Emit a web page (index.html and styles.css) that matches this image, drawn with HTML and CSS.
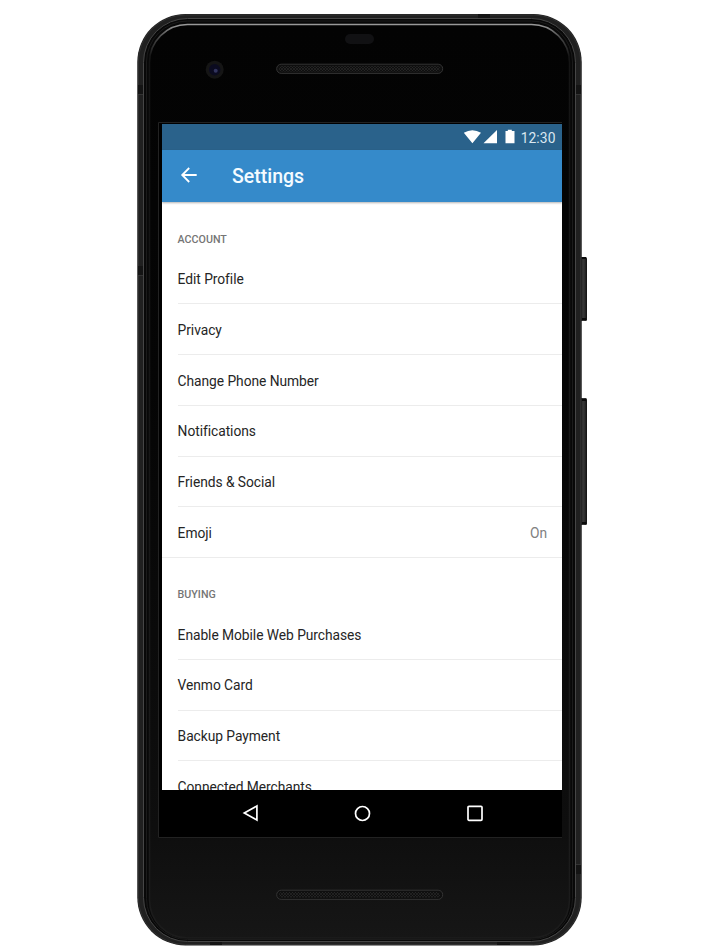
FILE: index.html
```html
<!DOCTYPE html>
<html lang="en">
<head>
<meta charset="utf-8">
<title>Settings</title>
<link rel="stylesheet" href="styles.css">
</head>
<body>
<main class="phone">
  <svg class="shell" width="452" height="936" viewBox="136 12 452 936" aria-hidden="true">
    <defs>
      <linearGradient id="face" x1="0" y1="0" x2="0" y2="1"><stop offset="0" stop-color="#030303"/><stop offset=".4" stop-color="#050505"/><stop offset=".88" stop-color="#0e0e0e"/><stop offset="1" stop-color="#161616"/></linearGradient>
      <linearGradient id="shine" x1="0" y1="0" x2="0" y2="1"><stop offset="0" stop-color="#999"/><stop offset=".014" stop-color="#484848"/><stop offset=".035" stop-color="#141414"/><stop offset="1" stop-color="#1c1c1c"/></linearGradient>
      <linearGradient id="key" x1="0" x2="1"><stop offset="0" stop-color="#222"/><stop offset=".6" stop-color="#373737"/><stop offset="1" stop-color="#111"/></linearGradient>
      <pattern id="mesh" width="3" height="3" patternUnits="userSpaceOnUse"><path d="M0 0l3 3M3 0L0 3" stroke="#2b2b2b" stroke-width=".6"/></pattern>
    </defs>
    <rect x="579" y="257" width="8" height="64" rx="1.5" fill="url(#key)"/>
    <path d="M582 258h4M582 319h4" stroke="#0b0b0b" stroke-width="2"/>
    <rect x="579" y="398" width="8" height="127" rx="1.5" fill="url(#key)"/>
    <path d="M582 400h4M582 523h4" stroke="#0b0b0b" stroke-width="2"/>
    <rect x="137.3" y="14" width="444.4" height="931.5" rx="48" fill="#202020"/>
    <rect x="138.3" y="15" width="442.4" height="929.5" rx="47" fill="none" stroke="#303030"/>
    <path d="M138 85h6v9h-6zM138 266h6v9h-6zM575 85h6v9h-6zM575 864h6v10h-6zM478 14h12v5h-12zM210 941h12v4h-12zM497 941h13v4h-13z" fill="#141414"/>
    <path d="M138 94.500h5M138 275.500h5M576 94.500h5M576 864.500h5" stroke="#333"/>
    <rect x="143.500" y="18.500" width="432" height="923" rx="44" fill="#080808" stroke="#464646"/>
    <rect x="146.500" y="21" width="426" height="918.500" rx="41" fill="none" stroke="#1b1b1b"/>
    <rect x="149.500" y="24.500" width="420" height="913.500" rx="38" fill="url(#face)" stroke="url(#shine)" stroke-width="1.5"/>
    <rect x="345" y="34" width="29" height="10" rx="5" fill="#111113"/>
    <circle cx="214.700" cy="69.700" r="9" fill="#151515"/>
    <circle cx="214.700" cy="69.700" r="5.700" fill="#0b0b20"/>
    <circle cx="215.700" cy="70.700" r="2" fill="#32345d"/>
    <rect x="276.700" y="64.200" width="166" height="9.200" rx="4.500" fill="#0f0f0f" stroke="#333"/>
    <rect x="279" y="66" width="161" height="5.500" rx="2.700" fill="url(#mesh)"/>
    <rect x="276.700" y="890.200" width="166" height="9.200" rx="4.500" fill="#0f0f0f" stroke="#333"/>
    <rect x="279" y="892" width="161" height="5.500" rx="2.700" fill="url(#mesh)"/>
    <rect x="158" y="122" width="404" height="716" fill="#000"/>
    <path d="M562 122.500H158.500V837.500H562" fill="none" stroke="#222"/>
  </svg>
  <div class="screen">
    <header class="status">
      <svg class="indicators" width="52" height="16" viewBox="0 0 52 16" fill="#fff" aria-hidden="true">
        <path d="M.8 3.800Q9.400-1.200 18 3.800L9.400 14.200zM20.500 14.200H34V1zM42.500 2h2.300V.8h4V2H51.500V14.200H42.500z"/>
      </svg>
      <span class="clock">12:30</span>
    </header>
    <div class="toolbar">
      <svg class="back" width="18" height="18" viewBox="0 0 18 18" fill="none" stroke="#fff" stroke-width="1.800" role="img" aria-label="Back"><path d="M16.700 9H2.800M9.200 2L2.200 9l7 7"/></svg>
      <h1 class="title">Settings</h1>
    </div>
    <div class="content">
      <section>
        <h2 class="heading">ACCOUNT</h2>
        <ul class="list">
          <li class="row"><span>Edit Profile</span></li>
          <li class="row"><span>Privacy</span></li>
          <li class="row"><span>Change Phone Number</span></li>
          <li class="row"><span>Notifications</span></li>
          <li class="row"><span>Friends &amp; Social</span></li>
          <li class="row row-last"><span>Emoji</span><span class="value">On</span></li>
        </ul>
      </section>
      <section>
        <h2 class="heading">BUYING</h2>
        <ul class="list">
          <li class="row"><span>Enable Mobile Web Purchases</span></li>
          <li class="row"><span>Venmo Card</span></li>
          <li class="row"><span>Backup Payment</span></li>
          <li class="row"><span>Connected Merchants</span></li>
        </ul>
      </section>
    </div>
    <nav class="navbar">
      <svg width="18" height="18" viewBox="0 0 18 18" role="img" aria-label="Back"><path d="M2.300 9L14.900 2v14z"/></svg>
      <svg width="18" height="18" viewBox="0 0 18 18" role="img" aria-label="Home"><circle cx="8.500" cy="9.500" r="7"/></svg>
      <svg width="18" height="18" viewBox="0 0 18 18" role="img" aria-label="Recent apps"><rect x="2" y="2.300" width="14" height="14" rx="1"/></svg>
    </nav>
  </div>
</main>
</body>
</html>
```
FILE: styles.css
```css
* { box-sizing: border-box; }
body {
  margin: 0;
  background: #fff;
  font-family: Roboto, sans-serif;
  overflow: hidden;
}
h1, h2, ul { margin: 0; padding: 0; }
.phone {
  position: relative;
  width: 452px;
  height: 936px;
  margin: 12px 0 0 136px;
  padding: 112px 26px 0;
}
.shell { position: absolute; top: 0; left: 0; }
.screen {
  position: relative;
  display: flex;
  flex-direction: column;
  width: 400px;
  height: 712px;
  overflow: hidden;
  background: #fff;
}
.status {
  display: flex;
  flex: 0 0 26px;
  align-items: center;
  justify-content: flex-end;
  gap: 6px;
  padding-right: 6.500px;
  background: #2a628b;
}
.clock { color: #dbe8f1; font-size: 13.800px; letter-spacing: .1px; line-height: 18px; padding-top: 1px; }
.toolbar {
  z-index: 1;
  display: flex;
  flex: 0 0 52.300px;
  align-items: center;
  gap: 34px;
  padding: 0 18px;
  background: #358aca;
  box-shadow: 0 1px 2px rgba(0, 0, 0, .3);
}
.back { margin-top: -2px; }
.title { color: #f4fbff; font-size: 19.500px; font-weight: 500; }
.content { flex: 1; min-height: 0; overflow: hidden; }
.heading {
  height: 51.500px;
  padding: 28.300px 15.600px 0;
  color: #757575;
  font-size: 10.700px;
  font-weight: 500;
  line-height: 17px;
}
.list { list-style: none; }
.row {
  display: flex;
  align-items: center;
  justify-content: space-between;
  height: 50.700px;
  margin-left: 15.600px;
  padding: 1px 15px 0 0;
  border-bottom: 1px solid #ececec;
  color: #252525;
  font-size: 13.800px;
  letter-spacing: -.05px;
}
.row-last { margin-left: 0; padding-left: 15.600px; }
.value { color: #808080; }
.navbar {
  display: flex;
  flex: 0 0 46px;
  align-items: center;
  justify-content: space-between;
  padding: 0 78px 0 80px;
  background: #000;
}
.navbar svg { fill: none; stroke: #fff; stroke-width: 1.700; }
```
